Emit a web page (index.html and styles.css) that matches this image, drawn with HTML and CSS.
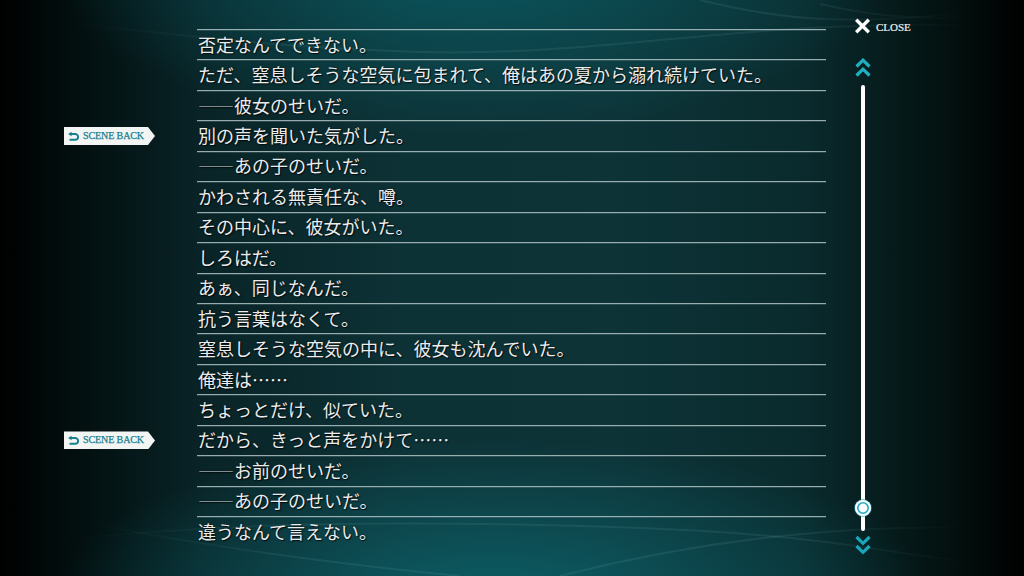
FILE: index.html
```html
<!DOCTYPE html>
<html lang="ja">
<head>
<meta charset="utf-8">
<title>Backlog</title>
<link rel="stylesheet" href="styles.css">
</head>
<body>
<div class="screen">
  <svg class="waves" width="1024" height="576" viewBox="0 0 1024 576" aria-hidden="true">
    <path d="M40 22 C 160 30, 260 48, 420 52 S 700 30, 860 26 S 980 30, 1024 40" />
    <path d="M700 0 C 780 20, 860 30, 1024 4" />
    <path d="M820 4 C 880 18, 940 22, 1024 14" />
    <path d="M0 548 C 200 520, 420 520, 640 528 S 900 560, 1024 566" />
    <path d="M0 505 C 160 540, 300 560, 460 576" />
    <path d="M560 576 C 700 540, 860 520, 1024 530" />
  </svg>

  <main class="log">
    <ol class="lines">
      <li class="line"><span class="mark"></span><p class="text">否定なんてできない。</p></li>
      <li class="line"><span class="mark"></span><p class="text">ただ、窒息しそうな空気に包まれて、俺はあの夏から溺れ続けていた。</p></li>
      <li class="line"><span class="mark"></span><p class="text"><span class="dash">――</span>彼女のせいだ。</p></li>
      <li class="line">
        <span class="mark">
          <button class="scene-back" type="button">
            <svg width="11" height="9" viewBox="0 0 11 9" aria-hidden="true"><path d="M3 2 H7.2 A2.9 2.9 0 0 1 7.2 7.8 H1.5" fill="none" stroke="#17808e" stroke-width="1.9"/><path d="M0 2 L3.6 -0.2 L3.6 4.2 Z" fill="#17808e"/></svg>
            SCENE BACK
          </button>
        </span>
        <p class="text">別の声を聞いた気がした。</p>
      </li>
      <li class="line"><span class="mark"></span><p class="text"><span class="dash">――</span>あの子のせいだ。</p></li>
      <li class="line"><span class="mark"></span><p class="text">かわされる無責任な、噂。</p></li>
      <li class="line"><span class="mark"></span><p class="text">その中心に、彼女がいた。</p></li>
      <li class="line"><span class="mark"></span><p class="text">しろはだ。</p></li>
      <li class="line"><span class="mark"></span><p class="text">あぁ、同じなんだ。</p></li>
      <li class="line"><span class="mark"></span><p class="text">抗う言葉はなくて。</p></li>
      <li class="line"><span class="mark"></span><p class="text">窒息しそうな空気の中に、彼女も沈んでいた。</p></li>
      <li class="line"><span class="mark"></span><p class="text">俺達は……</p></li>
      <li class="line"><span class="mark"></span><p class="text">ちょっとだけ、似ていた。</p></li>
      <li class="line">
        <span class="mark">
          <button class="scene-back" type="button">
            <svg width="11" height="9" viewBox="0 0 11 9" aria-hidden="true"><path d="M3 2 H7.2 A2.9 2.9 0 0 1 7.2 7.8 H1.5" fill="none" stroke="#17808e" stroke-width="1.9"/><path d="M0 2 L3.6 -0.2 L3.6 4.2 Z" fill="#17808e"/></svg>
            SCENE BACK
          </button>
        </span>
        <p class="text">だから、きっと声をかけて……</p>
      </li>
      <li class="line"><span class="mark"></span><p class="text"><span class="dash">――</span>お前のせいだ。</p></li>
      <li class="line"><span class="mark"></span><p class="text"><span class="dash">――</span>あの子のせいだ。</p></li>
      <li class="line"><span class="mark"></span><p class="text">違うなんて言えない。</p></li>
    </ol>

    <aside class="side">
      <button class="close" type="button">
        <svg width="17" height="16" viewBox="0 0 17 16" aria-hidden="true"><path d="M2.2 1.8 L14.8 14.2 M14.8 1.8 L2.2 14.2" stroke="#fff" stroke-width="3.4"/></svg>
        <span>CLOSE</span>
      </button>
      <div class="scroll">
        <svg class="chev" width="16" height="21" viewBox="0 0 16 21" aria-hidden="true"><path d="M1.5 8.5 L8 2.2 L14.5 8.5 M1.5 17.5 L8 11.2 L14.5 17.5" fill="none" stroke="#1fb1c3" stroke-width="3.2"/></svg>
        <div class="track"><span class="knob"></span></div>
        <svg class="chev" width="16" height="22" viewBox="0 0 16 22" aria-hidden="true"><path d="M1.5 3 L8 9.3 L14.5 3 M1.5 12 L8 18.3 L14.5 12" fill="none" stroke="#18a6bb" stroke-width="3.2"/></svg>
      </div>
    </aside>
  </main>
</div>
</body>
</html>
```

FILE: styles.css
```css
* { box-sizing: border-box; }

html, body {
  margin: 0;
  padding: 0;
  width: 1024px;
  height: 576px;
  overflow: hidden;
  background: #000;
}

.screen {
  position: relative;
  width: 1024px;
  height: 576px;
  overflow: hidden;
  font-family: "Noto Sans CJK JP", "Noto Sans", sans-serif;
  background:
    radial-gradient(ellipse 440px 160px at 48% 104%, rgba(12, 96, 104, 0.95), rgba(12, 96, 104, 0) 100%),
    radial-gradient(ellipse 420px 170px at 46% -6%, rgba(10, 88, 96, 0.95), rgba(10, 88, 96, 0) 100%),
    linear-gradient(90deg, #000 0%, #020c0c 6%, #092427 20%, #0d3236 40%, #0d3337 60%, #0a2b2e 78%, #03100f 93%, #000 100%);
}

/* faint light streaks behind the log, fading out toward the dark sides */
.waves {
  position: absolute;
  inset: 0;
  pointer-events: none;
  -webkit-mask-image: linear-gradient(90deg, transparent 6%, #000 30%, #000 78%, transparent 96%);
  mask-image: linear-gradient(90deg, transparent 6%, #000 30%, #000 78%, transparent 96%);
}
.waves path {
  fill: none;
  stroke: rgba(160, 225, 230, 0.09);
  stroke-width: 2;
}

.log {
  position: relative;
  display: flex;
  height: 576px;
}

.lines {
  list-style: none;
  margin: 0;
  padding: 29px 0 0;
  width: 826px;
  height: 576px;
  overflow: hidden;
}

.line {
  display: flex;
  height: 30.44px;
}

.mark {
  width: 197px;
  flex: none;
  display: flex;
  align-items: center;
  padding-left: 64px;
}

.text {
  flex: 1;
  margin: 0;
  display: flex;
  align-items: center;
  padding: 0 0 2px 1px;
  border-top: 1px solid rgba(178, 196, 197, 0.85);
  box-shadow: inset 0 1px 0 rgba(140, 165, 166, 0.25);
  color: #ececec;
  font-size: 18px;
  line-height: 1;
  white-space: nowrap;
  text-shadow: 1px 1px 1px rgba(0, 0, 0, 0.7), 0 0 2px rgba(0, 0, 0, 0.5);
}

.dash {
  color: #9ea8a8;
}

.scene-back {
  display: flex;
  align-items: center;
  gap: 4px;
  width: 91px;
  height: 18px;
  margin: 1px 0 0;
  padding: 0 0 0 4px;
  border: 0;
  background: #f3f5f5;
  clip-path: polygon(0 0, 84px 0, 91px 50%, 84px 100%, 0 100%);
  color: #17808e;
  font-family: "Liberation Serif", "DejaVu Serif", serif;
  font-size: 10px;
  letter-spacing: -0.1px;
  line-height: 1;
  white-space: nowrap;
  -webkit-text-stroke: 0.25px #17808e;
}
.scene-back svg { flex: none; }

.side {
  flex: 1;
  display: flex;
  flex-direction: column;
  padding-left: 28px;
}

.close {
  display: flex;
  align-items: center;
  gap: 5px;
  margin: 18px 0 0;
  padding: 0;
  border: 0;
  background: none;
  height: 16px;
  color: #eef1f1;
  font-family: "Liberation Serif", "DejaVu Serif", serif;
  font-size: 11px;
  letter-spacing: 0;
  line-height: 1;
  -webkit-text-stroke: 0.2px #eef1f1;
}
.close span { padding-top: 2px; }

.scroll {
  width: 18px;
  margin-top: 24px;
  display: flex;
  flex-direction: column;
  align-items: center;
}

.chev { display: block; }

.track {
  position: relative;
  width: 4px;
  height: 446px;
  margin: 6px 0 3px;
  border-radius: 2px;
  background: #fff;
}

/* handle showing the current position in the log */
.knob {
  position: absolute;
  left: -6px;
  top: 415px;
  width: 16px;
  height: 16px;
  border-radius: 50%;
  background: #fff;
  box-shadow:
    inset 0 0 0 2px #fff,
    inset 0 0 0 3.6px #22adc0,
    0 0 0 1px rgba(30, 150, 165, 0.55);
}
```
